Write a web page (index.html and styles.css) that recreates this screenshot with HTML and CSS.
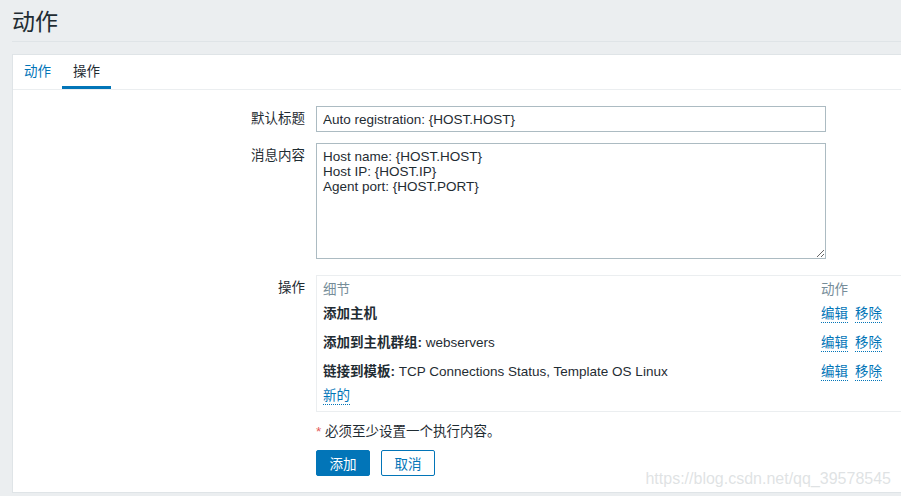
FILE: index.html
```html
<!DOCTYPE html>
<html lang="zh">
<head>
<meta charset="utf-8">
<title>动作</title>
<link rel="stylesheet" href="styles.css">
</head>
<body>
<header class="page-header"><h1 class="page-title">动作</h1></header>
<main class="panel">
  <nav class="tabs">
    <a class="tab">动作</a>
    <a class="tab tab-active">操作</a>
  </nav>
  <form class="form">
    <div class="form-row row-subject">
      <label class="form-label">默认标题</label>
      <div class="form-field"><input class="text-input" type="text" value="Auto registration: {HOST.HOST}"></div>
    </div>
    <div class="form-row row-message">
      <label class="form-label">消息内容</label>
      <div class="form-field"><textarea class="text-area">Host name: {HOST.HOST}
Host IP: {HOST.IP}
Agent port: {HOST.PORT}</textarea></div>
    </div>
    <div class="form-row row-ops">
      <label class="form-label">操作</label>
      <div class="form-field">
        <div class="ops-box">
          <div class="ops-head">
            <span class="ops-detail">细节</span>
            <span class="ops-actions">动作</span>
          </div>
          <div class="ops-row">
            <span class="ops-detail"><b>添加主机</b></span>
            <span class="ops-actions"><a class="link">编辑</a><a class="link">移除</a></span>
          </div>
          <div class="ops-row">
            <span class="ops-detail"><b>添加到主机群组:</b> webservers</span>
            <span class="ops-actions"><a class="link">编辑</a><a class="link">移除</a></span>
          </div>
          <div class="ops-row">
            <span class="ops-detail"><b>链接到模板:</b> TCP Connections Status, Template OS Linux</span>
            <span class="ops-actions"><a class="link">编辑</a><a class="link">移除</a></span>
          </div>
          <div class="ops-new"><a class="link">新的</a></div>
        </div>
      </div>
    </div>
    <div class="form-row row-note">
      <span class="form-label"></span>
      <div class="form-field note"><span class="req">*</span> 必须至少设置一个执行内容。</div>
    </div>
    <div class="form-row row-buttons">
      <span class="form-label"></span>
      <div class="form-field buttons">
        <button type="button" class="btn btn-primary">添加</button>
        <button type="button" class="btn btn-alt">取消</button>
      </div>
    </div>
  </form>
</main>
<div class="watermark">https://blog.csdn.net/qq_39578545</div>
</body>
</html>
```

FILE: styles.css
```css
* { box-sizing: border-box; }
html, body {
  margin: 0;
  padding: 0;
}
body {
  background: #ebeef0;
  color: #1f2c33;
  font-family: "Liberation Sans", Arial, "Noto Sans CJK SC", sans-serif;
  font-size: 13.5px;
  overflow: hidden;
  position: relative;
  height: 496px;
}
.page-header {
  height: 42px;
  margin: 0 0 0 12px;
  border-bottom: 1px solid #dfe4e7;
}
.page-title {
  margin: 0;
  font-weight: normal;
  font-size: 23px;
  line-height: 41px;
  color: #1f2c33;
  font-family: "Noto Sans CJK SC", sans-serif;
}
.panel {
  display: block;
  margin: 12px 0 0 12px;
  background: #fff;
  border: 1px solid #dfe4e7;
  border-right: none;
  height: 439px;
}
.tabs {
  display: flex;
  height: 35px;
  border-bottom: 1px solid #ebeef0;
}
.tab {
  display: block;
  padding: 1px 11px 0;
  line-height: 32px;
  height: 34px;
  color: #0275b8;
  border-bottom: 3px solid transparent;
}
.tab-active {
  color: #1f2c33;
  border-bottom-color: #0275b8;
}
.form {
  padding-top: 16px;
  display: flex;
  flex-direction: column;
}
.form-row {
  display: grid;
  grid-template-columns: 292px 1fr;
  column-gap: 11px;
}
.form-label {
  text-align: right;
  line-height: 26px;
}
.form-field { min-width: 0; }
.row-subject { margin-bottom: 11px; }
.row-message { margin-bottom: 16px; }
.row-ops { margin-bottom: 12px; }
.row-note { margin-bottom: 11px; }
.text-input, .text-area {
  display: block;
  width: 510px;
  border: 1px solid #acbbc2;
  border-radius: 0;
  font: inherit;
  color: #1f2c33;
  padding: 0 6px;
  margin: 0;
  outline: none;
  background: #fff;
}
.text-input { height: 26px; }
.text-area {
  height: 116px;
  padding: 5px 6px;
  line-height: 15px;
  resize: both;
}
.ops-box {
  border: 1px solid #ebeef0;
  border-right: none;
  padding: 4px 0 6px 6px;
}
.ops-head, .ops-row {
  display: grid;
  grid-template-columns: 498px auto;
}
.ops-head {
  line-height: 19px;
  color: #768d99;
}
.ops-row {
  height: 29px;
  align-items: center;
  line-height: 19px;
}
.ops-row b { font-weight: bold; }
.ops-new { line-height: 19px; height: 19px; }
.link {
  display: inline-block;
  color: #0275b8;
  line-height: 16px;
  border-bottom: 1px dotted #0275b8;
  cursor: pointer;
}
.ops-actions .link + .link { margin-left: 7px; }
.note { line-height: 15px; }
.req { color: #e45959; }
.buttons {
  display: flex;
  gap: 11px;
}
.btn {
  width: 54px;
  height: 26px;
  font: inherit;
  border-radius: 2px;
  padding: 0;
  margin: 0;
  cursor: pointer;
}
.btn-primary {
  background: #0275b8;
  border: 1px solid #0275b8;
  color: #fff;
}
.btn-alt {
  background: #fff;
  border: 1px solid #0275b8;
  color: #0275b8;
}
.watermark {
  position: absolute;
  right: 10px;
  bottom: 8px;
  font-family: "Liberation Sans", Arial, sans-serif;
  font-size: 16px;
  color: rgba(215, 219, 221, 0.8);
  white-space: nowrap;
  pointer-events: none;
}
```
